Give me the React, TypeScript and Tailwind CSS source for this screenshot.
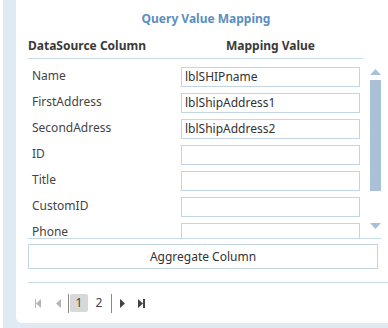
import React from "react";

const rows = [
  { label: "Name", value: "lblSHIPname" },
  { label: "FirstAddress", value: "lblShipAddress1" },
  { label: "SecondAdress", value: "lblShipAddress2" },
  { label: "ID", value: "" },
  { label: "Title", value: "" },
  { label: "CustomID", value: "" },
  { label: "Phone", value: "" },
];

function Tri({ dir, color }: { dir: "left" | "right"; color: string }) {
  return (
    <svg width="5" height="9" viewBox="0 0 5 9">
      {dir === "left" ? <path d="M5 0 L0 4.5 L5 9 Z" fill={color} /> : <path d="M0 0 L5 4.5 L0 9 Z" fill={color} />}
    </svg>
  );
}

export default function App() {
  return (
    <div className="w-[388px] h-[328px] bg-white overflow-hidden pl-[3px] font-['Noto_Sans',sans-serif] text-[12px]">
      <div className="h-full bg-[#dfeaf4] pl-[13px] pb-[5px]">
        <div className="h-full bg-white rounded-bl-[6px] pl-[12px] flex flex-col">
          {/* Title */}
          <div className="h-[34px] pt-[11px] w-[356px] text-center">
            <p className="leading-[16px] font-bold text-[#5b8ec0]">Query Value Mapping</p>
          </div>

          {/* Header */}
          <div className="w-[335px] h-[25px] flex items-center border-b border-[#c8dae8]">
            <div className="w-[153px] font-bold text-[#3a3a3a]">DataSource Column</div>
            <div className="w-[179px] text-center font-bold text-[#3a3a3a]">Mapping Value</div>
          </div>

          {/* Scroll area */}
          <div className="w-[353px] h-[180px] flex border-b border-[#c8dae8]">
            <div className="w-[335px] h-full overflow-hidden pt-[8px]">
              {rows.map((r) => (
                <div key={r.label} className="h-[26px] flex items-start pl-[4px]">
                  <div className="w-[149px] leading-[18px] text-[#444]">{r.label}</div>
                  <div className="w-[179px] h-[20px] border border-[#c2d6e5] px-[3px] leading-[18px] text-[#333]">{r.value}</div>
                </div>
              ))}
            </div>
            <div className="ml-[7px] w-[11px] flex flex-col items-center pt-[10px]">
              <svg width="11" height="6" viewBox="0 0 11 6">
                <path d="M5.5 0 L11 6 L0 6 Z" fill="#a9c0d6" />
              </svg>
              <div className="mt-[5px] w-[11px] h-[111px] bg-[#a9c0d6]" />
              <div className="flex-1" />
              <svg width="11" height="6" viewBox="0 0 11 6" className="mb-[9px]">
                <path d="M0 0 L11 0 L5.5 6 Z" fill="#a9c0d6" />
              </svg>
            </div>
          </div>

          {/* Button */}
          <div className="mt-[5px] w-[350px] h-[25px] border border-[#c4d5e2] flex items-center justify-center text-[#333]">
            Aggregate Column
          </div>

          {/* Pager */}
          <div className="mt-[13px] border-t border-[#c8dae8] flex-1 pt-[11px]">
            <div className="h-[18px] flex items-center text-[#444]">
              <div className="ml-[7px] flex items-center">
                <div className="w-[1px] h-[9px] bg-[#b5b5b5]" />
                <Tri dir="left" color="#b5b5b5" />
              </div>
              <div className="ml-[15px]">
                <Tri dir="left" color="#b5b5b5" />
              </div>
              <div className="ml-[7px] w-[1px] h-[19px] bg-[#8a8a8a]" />
              <div className="ml-[1px] w-[18px] h-[18px] rounded-[2px] bg-[#d8d8d8] flex items-center justify-center">1</div>
              <div className="w-[22px] text-center">2</div>
              <div className="ml-[1px] w-[1px] h-[19px] bg-[#8a8a8a]" />
              <div className="ml-[8px]">
                <Tri dir="right" color="#444" />
              </div>
              <div className="ml-[13px] flex items-center">
                <Tri dir="right" color="#444" />
                <div className="w-[2px] h-[9px] bg-[#444]" />
              </div>
            </div>
          </div>
        </div>
      </div>
    </div>
  );
}
